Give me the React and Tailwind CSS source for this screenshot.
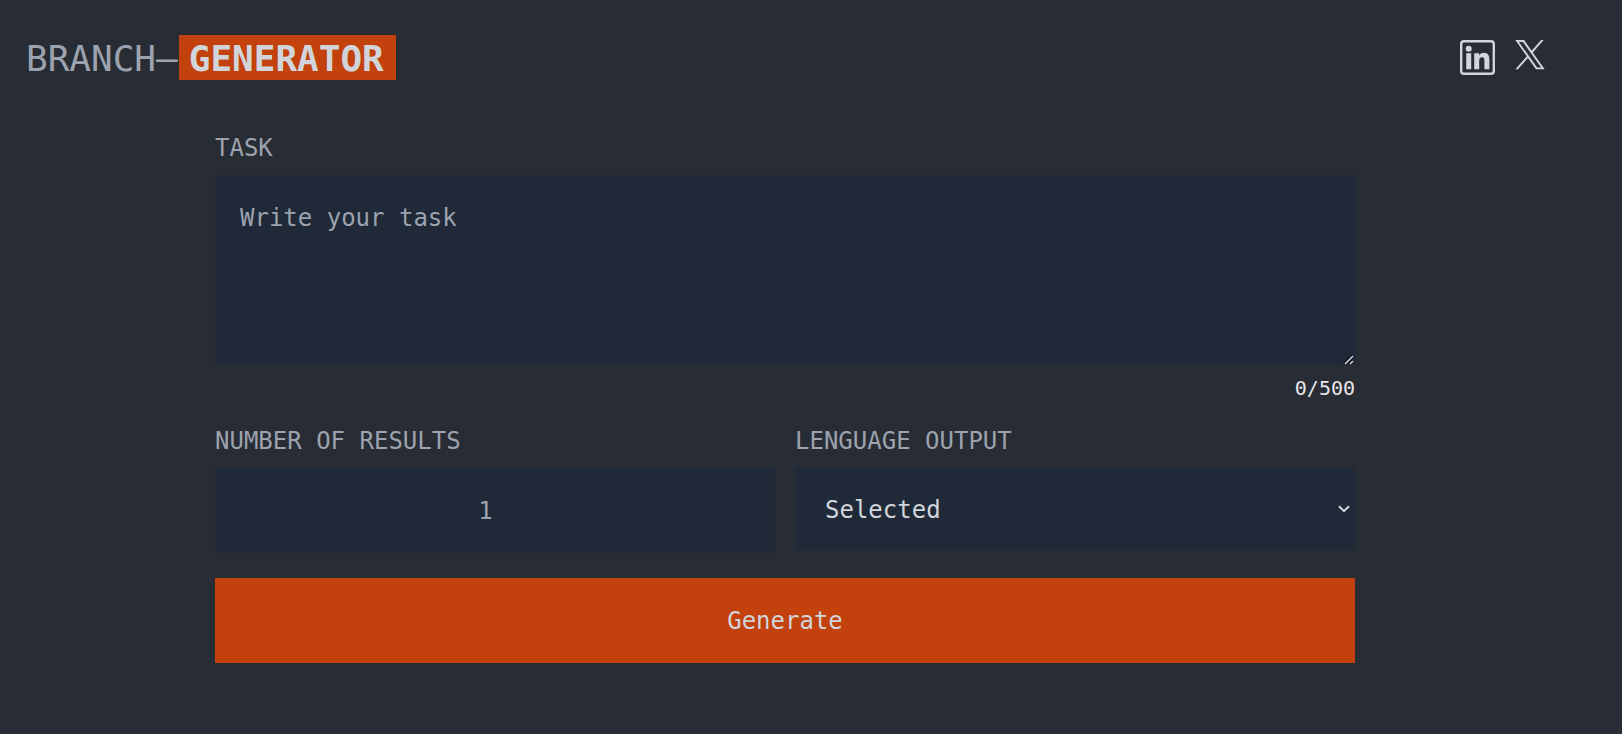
// src/App.jsx
import React, { useState } from 'react';

const MAX_LENGTH = 500;

const LANGUAGES = ['English', 'Spanish', 'French', 'German'];

const LinkedinIcon = () => (
  <svg viewBox="0 0 35 35" className="w-[35px] h-[35px]" fill="none" aria-hidden="true">
    <rect x="1.200" y="1.200" width="32.600" height="32.600" rx="2.800" stroke="currentColor" strokeWidth="2.400" />
    <circle cx="8.700" cy="8.700" r="3" fill="currentColor" />
    <path
      fill="currentColor"
      d="M6.200 13.200h5v16h-5zM14.200 13.200h4.800v2.200c.9-1.600 2.600-2.600 4.800-2.600 4.300 0 5.600 2.800 5.600 7v9.400h-5v-8.500c0-2-.4-3.500-2.400-3.500s-2.800 1.500-2.800 3.500v8.500h-5z"
    />
  </svg>
);

const XIcon = () => (
  <svg viewBox="0 0 300 307" className="w-[30px] h-[30px]" fill="currentColor" aria-hidden="true">
    <path d="M178.570 127.150 290.270 0h-26.460l-97.030 110.380L89.340 0H0l117.130 166.930L0 300.250h26.460l102.400-116.590 81.800 116.590h89.340M36.010 19.540H76.660l187.130 262.130h-40.660" />
  </svg>
);

export default function App() {
  const [task, setTask] = useState('');
  const [results, setResults] = useState('');
  const [language, setLanguage] = useState('');

  const handleSubmit = (e) => {
    e.preventDefault();
  };

  return (
    <div className="min-h-screen bg-[#282c34] pl-[25px] pr-[77px] pt-[35px] pb-12 font-['DejaVu_Sans_Mono','Liberation_Mono',monospace] text-2xl text-[#9ca3af]">
      {/* Header */}
      <header className="flex items-start justify-between">
        <h1 className="flex h-[45px] gap-px pl-px text-4xl leading-[47px]">
          BRANCH–
          <span className="bg-[#c2410c] pl-2.5 pr-3 font-bold text-[#d1d5db]">GENERATOR</span>
        </h1>
        <nav className="flex items-start gap-5 pt-[5px] text-[#d1d5db]">
          <a href="#linkedin" aria-label="LinkedIn">
            <LinkedinIcon />
          </a>
          <a href="#x" aria-label="X">
            <XIcon />
          </a>
        </nav>
      </header>

      {/* Generator form */}
      <main className="mx-auto mt-[50px] max-w-[1140px]">
        <form onSubmit={handleSubmit} className="flex flex-col">
          <label htmlFor="task" className="mb-[9px] leading-9">
            TASK
          </label>
          <div className="relative">
            <textarea
              id="task"
              rows={4}
              maxLength={MAX_LENGTH}
              placeholder="Write your task"
              value={task}
              onChange={(e) => setTask(e.target.value)}
              className="block h-[190px] w-full bg-[#1f2937] p-[25px] leading-9 text-[#d1d5db] placeholder:text-[#9ca3af] outline-none"
            />
            {/* Resize grip */}
            <svg
              viewBox="0 0 12 12"
              className="pointer-events-none absolute bottom-0 right-0 h-3 w-3 bg-[#1f2937]"
              fill="none"
              aria-hidden="true"
            >
              <path d="M0.500 10.500L9 2M5.500 10.500L9 7" stroke="#0b0f16" strokeWidth="1.500" />
              <path d="M2 11L10 3M7 11L10 8" stroke="#d1d5db" strokeWidth="1.500" />
            </svg>
          </div>
          <p className="mt-[7px] text-right text-xl leading-8 text-[#e5e7eb]">
            {task.length}/{MAX_LENGTH}
          </p>

          <div className="mt-[19px] grid grid-cols-2 items-start gap-5">
            <div className="flex flex-col">
              <label htmlFor="results" className="mb-[9px] leading-9">
                NUMBER OF RESULTS
              </label>
              <input
                id="results"
                type="number"
                min="1"
                max="10"
                placeholder="1"
                value={results}
                onChange={(e) => setResults(e.target.value)}
                className="h-[85px] w-full bg-[#1f2937] pl-6 pr-7 text-center text-[#d1d5db] placeholder:text-[#9ca3af] outline-none"
              />
            </div>
            <div className="flex flex-col">
              <label htmlFor="language" className="mb-[9px] leading-9">
                LENGUAGE OUTPUT
              </label>
              <div className="relative">
                <select
                  id="language"
                  value={language}
                  onChange={(e) => setLanguage(e.target.value)}
                  className="block h-[82px] w-full appearance-none bg-[#1f2937] pl-[30px] pt-0.5 text-[#d1d5db] outline-none"
                >
                  <option value="">Selected</option>
                  {LANGUAGES.map((item) => (
                    <option key={item} value={item}>
                      {item}
                    </option>
                  ))}
                </select>
                <svg
                  viewBox="0 0 12 8"
                  className="pointer-events-none absolute right-[5px] top-[37px] h-2 w-3"
                  fill="none"
                  stroke="#d1d5db"
                  strokeWidth="2"
                  aria-hidden="true"
                >
                  <path d="M1 1.200L6 6.200L11 1.200" />
                </svg>
              </div>
            </div>
          </div>

          <button type="submit" className="mt-[25px] h-[85px] w-full bg-[#c2410c] text-[#d1d5db]">
            Generate
          </button>
        </form>
      </main>
    </div>
  );
}
